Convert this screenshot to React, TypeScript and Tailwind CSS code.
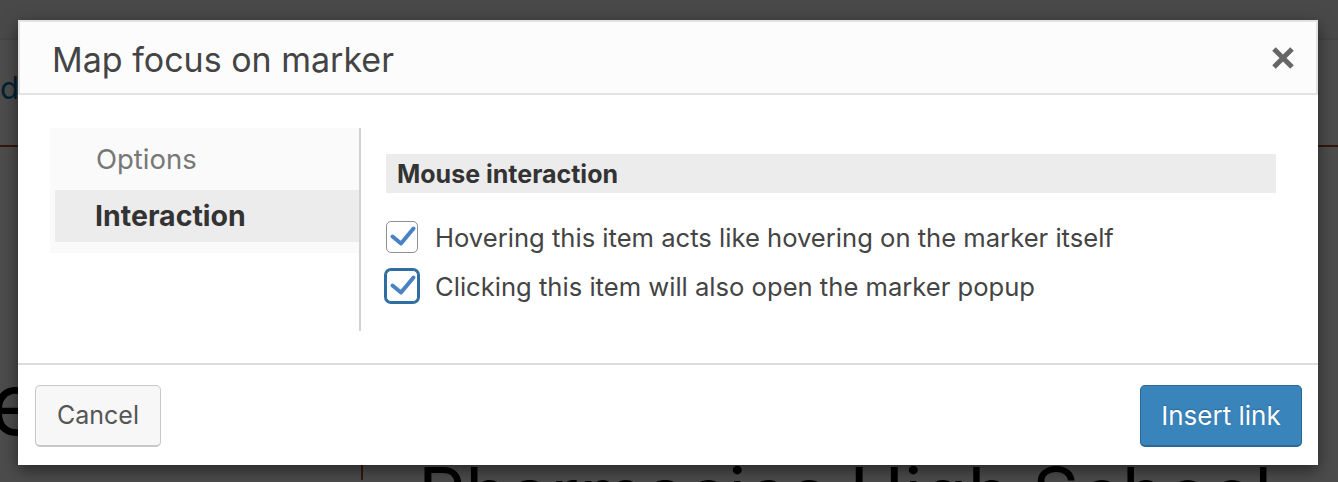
import clsx from "clsx";

const CheckBox = ({ focused }: { focused?: boolean }) => (
  <span
    className={clsx(
      "flex h-8 w-8 shrink-0 items-center justify-center rounded-[5px] border bg-white",
      focused ? "border-[#2f6ea5] ring-2 ring-[#2f6ea5]" : "border-[#8f9094]",
    )}
  >
    <svg viewBox="0 0 30 30" className="h-[30px] w-[30px]">
      <path
        d="M5.5 14.5 L14 21.5 L26.5 6.5"
        fill="none"
        stroke="#4a82c3"
        strokeWidth="4"
        strokeLinecap="round"
        strokeLinejoin="round"
      />
    </svg>
  </span>
);

const CloseIcon = () => (
  <svg viewBox="0 0 24 24" className="h-6 w-6">
    <path d="M3 3 L21 21 M21 3 L3 21" stroke="#666" strokeWidth="5" />
  </svg>
);

export default function App() {
  return (
    <div className="relative h-[482px] w-[1338px] overflow-hidden bg-white font-['Inter',sans-serif]">
      {/* page behind the overlay */}
      <div className="h-10 border-b-2 border-[#e6e6e6] bg-[#f3f3f3]" />
      <div className="h-[107px] border-b-2 border-[#b24a22] pt-[32px] text-[31px] leading-none text-[#0a6fa8]">
        d
      </div>
      <div className="flex h-[333px]">
        <div className="w-[361px] pt-[214px] text-[86px] leading-none text-black">
          <span className="-ml-[10px] block">e</span>
        </div>
        <div className="flex-1 border-l-2 border-[#b24a22] pt-[310px] pl-[55px] text-[74px] leading-none whitespace-nowrap text-black">
          Pharmacies High School
        </div>
      </div>

      {/* overlay + dialog */}
      <div className="absolute inset-0 bg-black/70 pt-[20px] pl-[18px]">
        <div className="flex h-[445px] w-[1300px] flex-col bg-white shadow-[0_5px_15px_rgba(0,0,0,0.5)]">
          <div className="flex h-[75px] shrink-0 items-center justify-between border-2 border-[#e2e2e2] bg-[#fcfcfc] pr-[21px] pl-[32px]">
            <h1 className="pt-[4px] text-[34px] text-[#444]">Map focus on marker</h1>
            <CloseIcon />
          </div>

          <div className="flex h-[268px] shrink-0 items-start pt-[33px] pr-[42px] pl-[32px]">
            <div className="w-[309px] bg-[#fafafa] pt-[6px] pb-[11px] pl-[5px]">
              <div className="flex h-[52px] items-center pl-[41px] text-[27.5px] text-[#777]">
                Options
              </div>
              <div className="mt-[4px] flex h-[52px] items-center bg-[#ececec] pl-[40px] text-[28.5px] font-bold text-[#333]">
                Interaction
              </div>
            </div>
            <div className="h-[203px] w-[2px] bg-[#d2d2d2]" />
            <div className="ml-[25px] flex-1 pt-[26px]">
              <div className="flex h-[39px] items-center bg-[#ececec] pt-[3px] pl-[11px] text-[25px] font-bold text-[#333]">
                Mouse interaction
              </div>
              <div className="mt-[28px] flex flex-col gap-[17px] text-[25.6px] text-[#444]">
                <label className="flex h-8 items-center gap-[17px]">
                  <CheckBox />
                  <span className="pt-[2px]">
                    Hovering this item acts like hovering on the marker itself
                  </span>
                </label>
                <label className="flex h-8 items-center gap-[17px]">
                  <CheckBox focused />
                  <span className="pt-[2px]">
                    Clicking this item will also open the marker popup
                  </span>
                </label>
              </div>
            </div>
          </div>

          <div className="flex flex-1 items-start justify-between border-t-2 border-[#dcdcdc] pt-[20px] pr-[16px] pl-[17px]">
            <button
              type="button"
              className="h-[62px] w-[126px] rounded-[5px] border border-b-2 border-[#c8c8c8] bg-[#f7f7f7] text-[25px] text-[#555]"
            >
              Cancel
            </button>
            <button
              type="button"
              className="h-[62px] w-[162px] rounded-[5px] border border-b-2 border-[#2c6797] bg-[#3884bb] text-[26px] text-white [text-shadow:0_-1px_1px_#2c6797]"
            >
              Insert link
            </button>
          </div>
        </div>
      </div>
    </div>
  );
}
